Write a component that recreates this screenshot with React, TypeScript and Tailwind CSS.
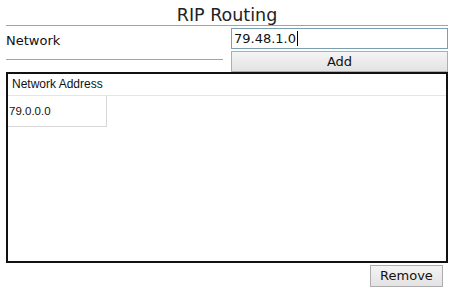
import React from "react";

const dv = { fontFamily: '"DejaVu Sans", Verdana, sans-serif' };
const ls = { fontFamily: '"Liberation Sans", Arial, sans-serif' };

export default function App() {
  return (
    <div className="w-[458px] h-[300px] bg-white overflow-hidden">
      <div className="ml-[6px] w-[442px]">
        <div
          className="h-[26px] pt-[6px] border-b border-[#a3a3a3] text-center text-[17.5px] leading-[19px] text-[#222]"
          style={dv}
        >
          RIP Routing
        </div>
        <div className="grid grid-cols-[217px_217px] gap-x-[8px] items-start">
          <div className="h-[34px] border-b border-[#a3a3a3] pt-[7px]">
            <div className="text-[13px] leading-[16px] text-[#111]" style={dv}>
              Network
            </div>
          </div>
          <div className="flex flex-col">
            <div
              className="mt-[2px] h-[21px] border border-[#7a9eb2] flex items-center pl-[2px] text-[13px] leading-[16px] text-[#111]"
              style={dv}
            >
              <span>79.48.1.0</span>
              <span className="ml-[1px] w-px h-[15px] bg-black" />
            </div>
            <div
              className="mt-[2px] h-[21px] border border-[#adadad] bg-linear-to-b from-[#f4f4f4] to-[#e3e3e3] flex items-center justify-center text-[13px] leading-[16px] text-[#111]"
              style={dv}
            >
              Add
            </div>
          </div>
        </div>
        <div className="h-[191px] border-2 border-[#111] bg-white flex flex-col">
          <div
            className="h-[22px] border-b border-[#e4e4e4] pl-[4px] pt-[3px] text-[12px] leading-[15px] text-[#111]"
            style={ls}
          >
            Network Address
          </div>
          <div
            className="w-[99px] h-[31px] border-r border-b border-[#d6d6d6] pl-[1px] pt-[8px] text-[11.5px] leading-[14px] text-[#111]"
            style={ls}
          >
            79.0.0.0
          </div>
        </div>
        <div className="flex justify-end mt-[2px] mr-[5px]">
          <div
            className="w-[73px] h-[22px] border border-[#adadad] bg-linear-to-b from-[#f4f4f4] to-[#e3e3e3] flex items-center justify-center text-[13px] leading-[16px] text-[#111]"
            style={dv}
          >
            Remove
          </div>
        </div>
      </div>
    </div>
  );
}
